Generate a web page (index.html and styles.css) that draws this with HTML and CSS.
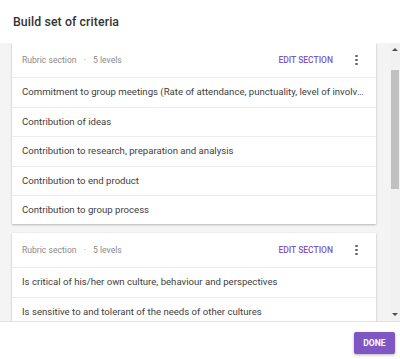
FILE: index.html
```html
<!DOCTYPE html>
<html lang="en">
<head>
    <meta charset="UTF-8">
    <title>Build set of criteria</title>
    <link rel="stylesheet" href="styles.css">
</head>
<body>

    <div class="dialog">
        <header class="dialog-header">
            <h1>Build set of criteria</h1>
        </header>

        <div class="dialog-body">
            <main class="sections">
                <section class="rubric-card">
                    <div class="card-head">
                        <span class="card-meta">Rubric section <span class="dot">·</span> 5 levels</span>
                        <a class="edit-link" href="#">Edit section</a>
                        <span class="more-btn"><i></i><i></i><i></i></span>
                    </div>
                    <div class="criterion">Commitment to group meetings (Rate of attendance, punctuality, level of involvement)</div>
                    <div class="criterion">Contribution of ideas</div>
                    <div class="criterion">Contribution to research, preparation and analysis</div>
                    <div class="criterion">Contribution to end product</div>
                    <div class="criterion">Contribution to group process</div>
                </section>

                <section class="rubric-card">
                    <div class="card-head">
                        <span class="card-meta">Rubric section <span class="dot">·</span> 5 levels</span>
                        <a class="edit-link" href="#">Edit section</a>
                        <span class="more-btn"><i></i><i></i><i></i></span>
                    </div>
                    <div class="criterion">Is critical of his/her own culture, behaviour and perspectives</div>
                    <div class="criterion">Is sensitive to and tolerant of the needs of other cultures</div>
                </section>
            </main>

            <!-- fake classic scrollbar -->
            <div class="scrollbar">
                <span class="arrow up"></span>
                <div class="track"><div class="thumb"></div></div>
                <span class="arrow down"></span>
            </div>
        </div>

        <footer class="dialog-footer">
            <button class="done-btn">Done</button>
        </footer>
    </div>

</body>
</html>
```

FILE: styles.css
```css
:root {
    --purple: #7e57c2;
    --text: #404040;
    --muted: #8a8a8a;
    --divider: #ececec;
    --body-bg: #f4f4f4;
}

* {
    box-sizing: border-box;
}

body {
    margin: 0;
    font-family: Roboto, "Liberation Sans", sans-serif;
    background: #fff;
    color: var(--text);
}

.dialog {
    width: 400px;
    height: 359px;
    display: flex;
    flex-direction: column;
    overflow: hidden;
}

/* --- Header --- */
.dialog-header {
    height: 43px;
    flex: none;
    padding: 0 13px;
    display: flex;
    align-items: center;
}

.dialog-header h1 {
    margin: 0;
    font-size: 12.3px;
    font-weight: 500;
    color: #333;
    letter-spacing: 0.1px;
}

/* --- Scrolling body --- */
.dialog-body {
    flex: 1;
    min-height: 0;
    display: flex;
    background: var(--body-bg);
}

.sections {
    flex: 1;
    overflow: hidden;
    padding: 0 14px 0 12px;
}

.rubric-card {
    background: #fff;
    margin-bottom: 9px;
    box-shadow: 0 1px 2px rgba(0, 0, 0, 0.25), 0 0 1px rgba(0, 0, 0, 0.08);
}

.card-head {
    height: 35px;
    display: flex;
    align-items: center;
    padding: 0 10px;
    border-bottom: 1px solid var(--divider);
}

.card-meta {
    flex: 1;
    font-size: 8.6px;
    color: var(--muted);
}

.card-meta .dot {
    margin: 0 5px;
}

.edit-link {
    font-size: 8.5px;
    font-weight: 500;
    color: var(--purple);
    text-decoration: none;
    text-transform: uppercase;
    margin-right: 22px;
}

.more-btn {
    width: 3px;
    display: flex;
    flex-direction: column;
    gap: 1.5px;
    margin-right: 8px;
}

.more-btn i {
    display: block;
    width: 2.5px;
    height: 2.5px;
    border-radius: 50%;
    background: #666;
}

.criterion {
    height: 29.6px;
    padding: 0 10px;
    border-bottom: 1px solid var(--divider);
    font-size: 9.6px;
    line-height: 28.6px;
    white-space: nowrap;
    overflow: hidden;
    text-overflow: ellipsis;
}

.criterion:last-child {
    height: 27.6px;
    line-height: 27.6px;
    border-bottom: none;
}

/* --- Scrollbar --- */
.scrollbar {
    width: 10px;
    flex: none;
    background: #f1f1f1;
    display: flex;
    flex-direction: column;
    align-items: center;
}

.scrollbar .track {
    flex: 1;
    width: 100%;
    padding-top: 14px;
}

.scrollbar .thumb {
    height: 119px;
    background: #c1c1c1;
    margin: 0 1px;
}

.arrow {
    flex: none;
    width: 0;
    height: 0;
    border-left: 3px solid transparent;
    border-right: 3px solid transparent;
    margin: 5px 0;
}

.arrow.up {
    border-bottom: 3px solid #505050;
}

.arrow.down {
    border-top: 3px solid #505050;
}

/* --- Footer --- */
.dialog-footer {
    height: 38px;
    flex: none;
    border-top: 1px solid #e2e2e2;
    display: flex;
    justify-content: flex-end;
    align-items: flex-start;
    padding: 10px 5px 0 0;
}

.done-btn {
    width: 41px;
    height: 22px;
    border: none;
    border-radius: 2px;
    background: var(--purple);
    color: #fff;
    font-family: inherit;
    font-size: 8.6px;
    font-weight: 700;
    text-transform: uppercase;
    padding: 0;
    box-shadow: 0 1px 3px rgba(0, 0, 0, 0.3);
}
```
